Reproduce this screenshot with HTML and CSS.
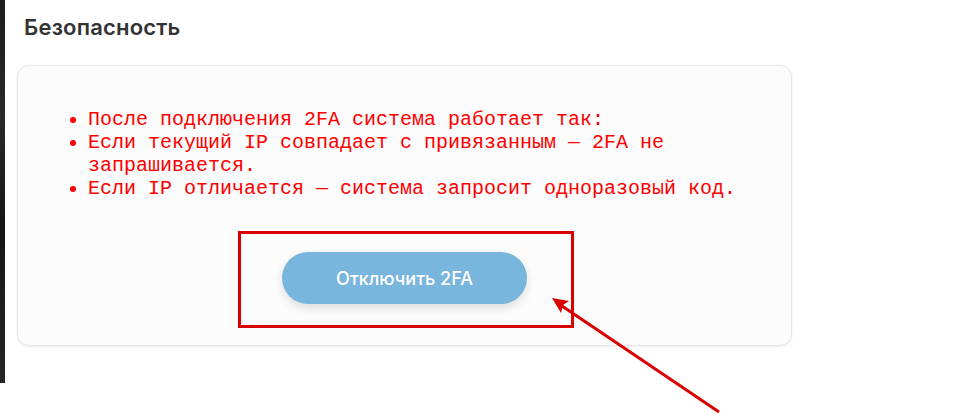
FILE: index.html
```html
<!DOCTYPE html>
<html lang="ru">
<head>
<meta charset="utf-8">
<title>Безопасность</title>
<link rel="stylesheet" href="styles.css">
</head>
<body>
<div class="page">
  <div class="strip"></div>
  <main class="main">
    <h2 class="title">Безопасность</h2>
    <section class="card">
      <ul class="notes">
        <li>После подключения 2FA система работает так:</li>
        <li>Если текущий IP совпадает с привязанным — 2FA не запрашивается.</li>
        <li>Если IP отличается — система запросит одноразовый код.</li>
      </ul>
      <div class="actions">
        <button class="btn" type="button">Отключить 2FA</button>
      </div>
    </section>
  </main>
  <div class="highlight"></div>
  <svg class="arrow" width="977" height="413" viewBox="0 0 977 413">
    <line x1="719" y1="412" x2="559" y2="304" stroke="#d90000" stroke-width="3"/>
    <polygon points="552,298 569,301 563,305 561,313" fill="#d90000"/>
  </svg>
</div>
</body>
</html>
```

FILE: styles.css
```css
html, body {
  margin: 0;
  padding: 0;
  background: #ffffff;
}

.page {
  position: relative;
  display: flex;
  align-items: flex-start;
  width: 977px;
  height: 413px;
  overflow: hidden;
}

.strip {
  flex: 0 0 5px;
  height: 383px;
  background: linear-gradient(180deg, #1c1c1c 0%, #2a2a2a 30%, #151515 60%, #262626 100%);
}

.main {
  padding: 0 12px;
}

.title {
  margin: 13px 0 0 7px;
  font-family: Inter, "Noto Sans", sans-serif;
  font-size: 22px;
  font-weight: 600;
  line-height: 28px;
  letter-spacing: 0.2px;
  color: #333333;
}

.card {
  box-sizing: border-box;
  width: 775px;
  height: 281px;
  margin-top: 24px;
  padding: 22px 30px 0;
  background: #fcfcfc;
  border: 1px solid #e6e6e6;
  border-radius: 12px;
  box-shadow: 0 1px 3px rgba(0, 0, 0, 0.07);
}

.notes {
  margin: 20px 0 0;
  padding-left: 40px;
  font-family: "Liberation Mono", "Courier New", monospace;
  font-size: 20px;
  color: #ff0000;
  list-style: disc;
}

.actions {
  display: flex;
  justify-content: center;
  margin-top: 52px;
}

.btn {
  width: 245px;
  height: 52px;
  border: none;
  border-radius: 26px;
  background: #78b6de;
  color: #ffffff;
  font-family: Inter, "Noto Sans", sans-serif;
  font-size: 18px;
  font-weight: 500;
  box-shadow: 0 4px 10px rgba(0, 0, 0, 0.12);
  cursor: pointer;
}

.highlight {
  position: absolute;
  left: 238px;
  top: 231px;
  width: 330px;
  height: 91px;
  border: 3px solid #d90000;
}

.arrow {
  position: absolute;
  left: 0;
  top: 0;
  pointer-events: none;
}
```
